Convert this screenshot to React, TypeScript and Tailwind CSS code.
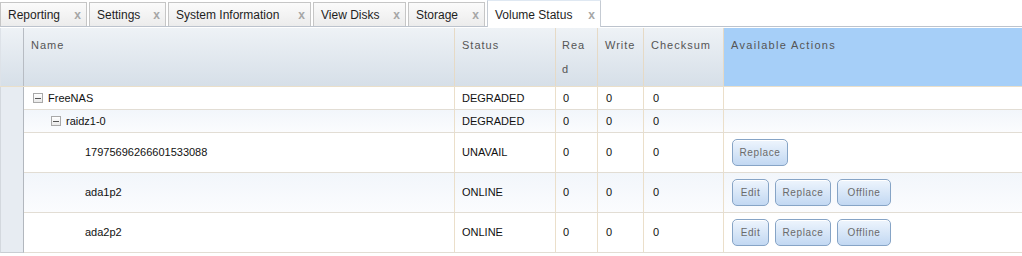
import { ReactNode } from 'react'

const tabs = [
  { label: 'Reporting', w: 'w-[87px]' },
  { label: 'Settings', w: 'w-[77px]' },
  { label: 'System Information', w: 'w-[143px]' },
  { label: 'View Disks', w: 'w-[93px]' },
  { label: 'Storage', w: 'w-[77px]' },
  { label: 'Volume Status', w: 'w-[114px]', active: true },
]

type Row = {
  name: string
  level: number
  expander: boolean
  status: string
  actions: string[]
  tall: boolean
  alt: boolean
}

const rows: Row[] = [
  { name: 'FreeNAS', level: 0, expander: true, status: 'DEGRADED', actions: [], tall: false, alt: false },
  { name: 'raidz1-0', level: 1, expander: true, status: 'DEGRADED', actions: [], tall: false, alt: true },
  { name: '17975696266601533088', level: 2, expander: false, status: 'UNAVAIL', actions: ['Replace'], tall: true, alt: false },
  { name: 'ada1p2', level: 2, expander: false, status: 'ONLINE', actions: ['Edit', 'Replace', 'Offline'], tall: true, alt: true },
  { name: 'ada2p2', level: 2, expander: false, status: 'ONLINE', actions: ['Edit', 'Replace', 'Offline'], tall: true, alt: false },
]

const btnWidth: Record<string, string> = {
  Edit: 'w-[37px]',
  Replace: 'w-[56px]',
  Offline: 'w-[54px]',
}

const indent = ['pl-[9px]', 'pl-[27px]', 'pl-[46px]']

function Expander() {
  return (
    <span className="flex h-[10px] w-[10px] items-center justify-center border border-[#a9a9a9] bg-linear-to-b from-white to-[#e9e9e9]">
      <span className="h-px w-[6px] bg-[#555]" />
    </span>
  )
}

function HeaderCell({ children, className }: { children: ReactNode; className: string }) {
  return (
    <div className={`h-full break-all border-r border-[#e6dac6] pt-[5px] leading-[24px] ${className}`}>
      {children}
    </div>
  )
}

function CloseX() {
  return <span className="text-[12px] font-bold leading-none text-[#a6a6a6]">x</span>
}

export default function App() {
  return (
    <div className="h-[256px] w-[1022px] overflow-hidden bg-white font-['Liberation_Sans',Arial,sans-serif]">
      {/* tab strip */}
      <div className="flex h-[27px] items-end border-b border-[#bcc3cd]">
        {tabs.map((t) =>
          t.active ? (
            <div
              key={t.label}
              className={`${t.w} relative -mb-px flex h-[27px] items-center justify-between border border-b-0 border-t-[#dfe8f2] border-x-[#c5cbd3] bg-white pl-[7px] pr-[5px] pt-[1px]`}
            >
              <span className="text-[12px] text-[#1e1e1e]">{t.label}</span>
              <CloseX />
            </div>
          ) : (
            <div
              key={t.label}
              className={`${t.w} mr-[2px] flex h-[24px] items-center justify-between border border-b-0 border-[#c6c6c6] bg-linear-to-b from-[#fbfbfb] to-[#ececec] pl-[7px] pr-[5px]`}
            >
              <span className="text-[12px] text-[#1e1e1e]">{t.label}</span>
              <CloseX />
            </div>
          ),
        )}
      </div>

      {/* grid */}
      <div className="mt-px">
        {/* header */}
        <div className="flex h-[59px] border-b border-[#eadfca] text-[11px] tracking-[1px] text-[#555]">
          <div className="h-full w-[24px] border-x border-l-[#dde2e8] border-r-[#b7bcc3] bg-linear-to-b from-[#eef2f6] to-[#d6dfe8]" />
          <div className="flex h-full flex-1 bg-linear-to-b from-[#eef2f6] to-[#d6dfe8]">
            <HeaderCell className="w-[431px] pl-[7px]">Name</HeaderCell>
            <HeaderCell className="w-[101px] pl-[7px]">Status</HeaderCell>
            <HeaderCell className="w-[42px] pl-[6px] pr-[7px]">Read</HeaderCell>
            <HeaderCell className="w-[46px] pl-[7px] pr-[4px]">Write</HeaderCell>
            <HeaderCell className="w-[80px] pl-[7px]">Checksum</HeaderCell>
            <div className="h-full flex-1 bg-[#a6cff8] pl-[7px] pt-[5px] leading-[24px] tracking-[1.3px]">
              Available Actions
            </div>
          </div>
        </div>

        {/* body */}
        {rows.map((r, i) => (
          <div key={r.name} className={`flex ${r.tall ? 'h-[40px]' : 'h-[23px]'}`}>
            <div
              className={`w-[24px] border-x border-l-[#d3d8de] border-r-[#b2b7be] bg-[#e7ecf2] ${
                i === rows.length - 1 ? 'border-b border-b-[#c9cdd2]' : ''
              }`}
            />
            <div
              className={`flex flex-1 border-b border-[#e2ddd4] text-[11px] text-[#111] ${
                r.alt ? 'bg-linear-to-b from-[#f2f6fb] to-[#fbfcfe]' : 'bg-white'
              }`}
            >
              <div className={`flex w-[431px] items-center gap-[5px] border-r border-[#ebdfca] ${indent[r.level]}`}>
                {r.expander ? <Expander /> : <span className="w-[10px]" />}
                <span>{r.name}</span>
              </div>
              <div className="flex w-[101px] items-center border-r border-[#ebdfca] pl-[7px]">{r.status}</div>
              <div className="flex w-[42px] items-center border-r border-[#ebdfca] pl-[7px]">0</div>
              <div className="flex w-[46px] items-center border-r border-[#ebdfca] pl-[8px]">0</div>
              <div className="flex w-[80px] items-center border-r border-[#ebdfca] pl-[9px]">0</div>
              <div className="flex flex-1 items-center gap-[6px] pl-[8px]">
                {r.actions.map((a) => (
                  <button
                    key={a}
                    className={`${btnWidth[a]} h-[27px] rounded-[5px] border border-[#86a4c6] bg-linear-to-b from-[#eef5fd] to-[#c2d8f2] text-center text-[10px] tracking-[0.6px] text-[#6a6a6a] shadow-[inset_0_1px_0_#ffffff]`}
                  >
                    {a}
                  </button>
                ))}
              </div>
            </div>
          </div>
        ))}
      </div>
    </div>
  )
}
